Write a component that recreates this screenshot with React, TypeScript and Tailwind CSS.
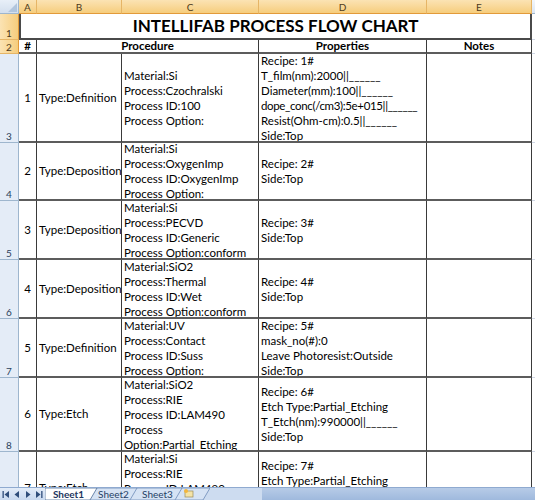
import React from "react";

type Row = { n: string; label: string; type: string; proc: string[]; props: string[] };

const rows: Row[] = [
  {
    n: "1",
    label: "3",
    type: "Type:Definition",
    proc: ["Material:Si", "Process:Czochralski", "Process ID:100", "Process Option:"],
    props: [
      "Recipe: 1#",
      "T_film(nm):2000||______",
      "Diameter(mm):100||______",
      "dope_conc(/cm3):5e+015||______",
      "Resist(Ohm-cm):0.5||______",
      "Side:Top",
    ],
  },
  {
    n: "2",
    label: "4",
    type: "Type:Deposition",
    proc: ["Material:Si", "Process:OxygenImp", "Process ID:OxygenImp", "Process Option:"],
    props: ["Recipe: 2#", "Side:Top"],
  },
  {
    n: "3",
    label: "5",
    type: "Type:Deposition",
    proc: ["Material:Si", "Process:PECVD", "Process ID:Generic", "Process Option:conform"],
    props: ["Recipe: 3#", "Side:Top"],
  },
  {
    n: "4",
    label: "6",
    type: "Type:Deposition",
    proc: ["Material:SiO2", "Process:Thermal", "Process ID:Wet", "Process Option:conform"],
    props: ["Recipe: 4#", "Side:Top"],
  },
  {
    n: "5",
    label: "7",
    type: "Type:Definition",
    proc: ["Material:UV", "Process:Contact", "Process ID:Suss", "Process Option:"],
    props: ["Recipe: 5#", "mask_no(#):0", "Leave Photoresist:Outside", "Side:Top"],
  },
  {
    n: "6",
    label: "8",
    type: "Type:Etch",
    proc: ["Material:SiO2", "Process:RIE", "Process ID:LAM490", "Process", "Option:Partial_Etching"],
    props: ["Recipe: 6#", "Etch Type:Partial_Etching", "T_Etch(nm):990000||______", "Side:Top"],
  },
  {
    n: "7",
    label: "9",
    type: "Type:Etch",
    proc: ["Material:Si", "Process:RIE", "Process ID:LAM490", "Process", "Option:Partial_Etching"],
    props: ["Recipe: 7#", "Etch Type:Partial_Etching", "T_Etch(nm):990000||______", "Side:Top"],
  },
];

const cellB = "border-r border-r-[#3a3a3a] border-b-2 border-b-[#5c5c5c]";

function ColHead({ l }: { l: string }) {
  return (
    <div className="flex items-center justify-center bg-gradient-to-b from-[#fbe3b3] to-[#f6cd7c] border-r border-r-[#e6b566] border-b border-b-[#e29a3a] text-[10px] text-[#4d3a1c] leading-none">
      {l}
    </div>
  );
}

function RowHead({ n, orange }: { n: string; orange?: boolean }) {
  return (
    <div
      className={
        orange
          ? "flex items-end justify-center pb-[1px] bg-gradient-to-r from-[#fbe3b3] to-[#f6cd7c] border-r border-r-[#e29a3a] border-b border-b-[#e6b566] text-[10px] text-[#4d3a1c] leading-none"
          : "flex items-end justify-center pb-[1px] bg-[#e4ecf7] border-r border-r-[#9eb6ce] border-b border-b-[#9eb6ce] text-[10px] text-[#2a3f5c] leading-none"
      }
    >
      {n}
    </div>
  );
}

function Lines({ items }: { items: string[] }) {
  return (
    <div className="flex flex-col">
      {items.map((t, i) => (
        <div
          key={i}
          className={t.startsWith("dope") ? "leading-[15px] whitespace-pre tracking-[-0.35px]" : "leading-[15px] whitespace-pre"}
        >
          {t}
        </div>
      ))}
    </div>
  );
}

function Arrow({ dir, bar }: { dir: "l" | "r"; bar?: boolean }) {
  return (
    <svg width="8" height="7" viewBox="0 0 8 7">
      {dir === "l" ? (
        <>
          {bar && <rect x="0.5" y="0" width="1.3" height="7" fill="#2f4d7a" />}
          <polygon points={bar ? "7,0 7,7 2.5,3.5" : "6,0 6,7 1.5,3.5"} fill="#2f4d7a" />
        </>
      ) : (
        <>
          <polygon points={bar ? "1,0 1,7 5.5,3.5" : "2,0 2,7 6.5,3.5"} fill="#2f4d7a" />
          {bar && <rect x="6.2" y="0" width="1.3" height="7" fill="#2f4d7a" />}
        </>
      )}
    </svg>
  );
}

export default function App() {
  return (
    <div className="w-[535px] h-[500px] overflow-hidden bg-white flex flex-col font-['Lato',sans-serif] text-black">
      <div className="h-[487px] overflow-hidden">
        <div className="grid grid-cols-[19px_18px_85px_137px_168px_105px_1fr] grid-rows-[14px_26px_14px_89px_58px_59px_59px_59px_74px_74px] text-[11.5px]">
          {/* column header row */}
          <div className="relative bg-gradient-to-b from-[#e8eff8] to-[#d3dfee] border-r border-r-[#9eb6ce] border-b border-b-[#9eb6ce]">
            <svg className="absolute right-[1px] bottom-[1px]" width="9" height="9" viewBox="0 0 9 9">
              <polygon points="9,0 9,9 0,9" fill="#b1c5dd" />
            </svg>
          </div>
          <ColHead l="A" />
          <ColHead l="B" />
          <ColHead l="C" />
          <ColHead l="D" />
          <ColHead l="E" />
          <div className="bg-gradient-to-b from-[#f3f7fc] to-[#dbe6f4] border-b border-b-[#9eb6ce]" />

          {/* row 1 */}
          <RowHead n="1" orange />
          <div className="col-span-5 flex items-center justify-center border-l-2 border-r-2 border-b-2 border-[#4a4a4a] text-[17px] font-bold">
            INTELLIFAB PROCESS FLOW CHART
          </div>
          <div className="border-b border-b-[#d0d7e5]" />

          {/* row 2 */}
          <RowHead n="2" orange />
          <div className={`${cellB} flex items-center justify-center font-bold`}>#</div>
          <div className={`${cellB} col-span-2 flex items-center justify-center font-bold`}>Procedure</div>
          <div className={`${cellB} flex items-center justify-center font-bold`}>Properties</div>
          <div className={`${cellB} flex items-center justify-center font-bold`}>Notes</div>
          <div className="border-b border-b-[#d0d7e5]" />

          {rows.map((r) => (
            <React.Fragment key={r.n}>
              <RowHead n={r.label} />
              <div className={`${cellB} flex items-center justify-end pr-[5px]`}>{r.n}</div>
              <div className={`${cellB} flex items-center pl-[2px] overflow-hidden`}>{r.type}</div>
              <div className={`${cellB} flex items-center pl-[2px] overflow-hidden`}>
                <Lines items={r.proc} />
              </div>
              <div className={`${cellB} flex items-center pl-[2px] overflow-hidden`}>
                <Lines items={r.props} />
              </div>
              <div className={cellB} />
              <div className="border-b border-b-[#d0d7e5]" />
            </React.Fragment>
          ))}
        </div>
      </div>

      {/* sheet tab bar */}
      <div className="h-[13px] flex border-t border-t-[#8faad0] text-[10px] leading-none">
        <div className="w-[45px] flex items-center justify-around px-[1px] bg-gradient-to-b from-[#e3ecf8] to-[#c9d9ef]">
          <Arrow dir="l" bar />
          <Arrow dir="l" />
          <Arrow dir="r" />
          <Arrow dir="r" bar />
        </div>
        <div className="relative w-[165px] flex bg-[#cddcf0]">
          <svg className="absolute inset-0" width="165" height="12" viewBox="0 0 165 12">
            <polygon points="135,0 165,0 158,12 128,12" fill="#d6e3f4" stroke="#6d8cb8" strokeWidth="0.8" />
            <polygon points="90,0 137,0 130,12 83,12" fill="#d6e3f4" stroke="#6d8cb8" strokeWidth="0.8" />
            <polygon points="47,0 92,0 85,12 40,12" fill="#d6e3f4" stroke="#6d8cb8" strokeWidth="0.8" />
            <polygon points="0,0 52,0 45,12 0,12" fill="#ffffff" stroke="#4d6c98" strokeWidth="0.8" />
            <rect x="140" y="3" width="8" height="6" fill="#f4e3a6" stroke="#9a8a58" strokeWidth="0.7" />
            <circle cx="141" cy="3" r="2" fill="#f3b63b" />
          </svg>
          <div className="relative w-[47px] h-[12px] flex items-center justify-center font-bold text-[#1c3560]">Sheet1</div>
          <div className="relative w-[43px] h-[12px] flex items-center justify-center text-[#253f66]">Sheet2</div>
          <div className="relative w-[45px] h-[12px] flex items-center justify-center text-[#253f66]">Sheet3</div>
        </div>
        <div className="w-[52px] bg-[#cddcf0]" />
        <div className="flex-1 bg-gradient-to-b from-[#b7cbe7] to-[#9fb9dd]" />
      </div>
    </div>
  );
}
